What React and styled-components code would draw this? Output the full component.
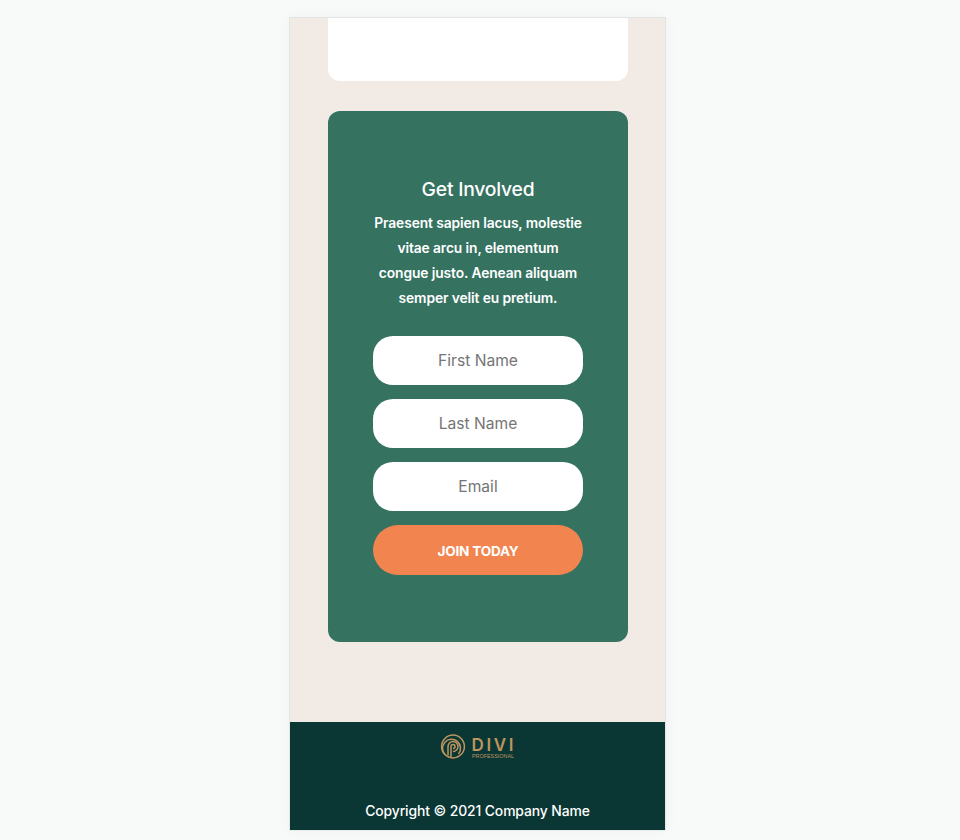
import styled, { createGlobalStyle } from 'styled-components';

const GlobalStyle = createGlobalStyle`
  * {
    box-sizing: border-box;
  }

  body {
    margin: 0;
    background: #f8faf9;
    font-family: Inter, "Noto Sans", "Liberation Sans", sans-serif;
  }
`;

const Page = styled.div`
  display: flex;
  justify-content: center;
  height: 840px;
  padding-top: 17px;
  padding-right: 5px;
  overflow: hidden;
`;

const Phone = styled.div`
  display: flex;
  flex-direction: column;
  width: 377px;
  height: 814px;
  border: 1px solid #e4e4e4;
  border-bottom-color: #e9eaea;
  background: #f2eae4;
  box-shadow: 0 0 14px rgba(0, 0, 0, 0.035);
`;

const Content = styled.main`
  display: flex;
  flex-direction: column;
  flex: 1;
  gap: 30px;
  padding: 0 37px 0 38px;
`;

const BlankCard = styled.div`
  height: 63px;
  background: #fff;
  border-radius: 0 0 12px 12px;
`;

const JoinCard = styled.section`
  display: flex;
  flex-direction: column;
  align-items: center;
  height: 531px;
  padding-top: 66px;
  background: #357260;
  border-radius: 12px;
  color: #fff;
`;

const Heading = styled.h2`
  margin: 0 0 9px;
  font-size: 19.3px;
  font-weight: 500;
  line-height: 25px;
  letter-spacing: -0.2px;
`;

const Blurb = styled.p`
  width: 210px;
  margin: 0 0 25px;
  font-size: 13.8px;
  font-weight: 600;
  line-height: 25px;
  text-align: center;
  letter-spacing: -0.1px;
`;

const Form = styled.form`
  display: flex;
  flex-direction: column;
  gap: 14px;
  width: 210px;
`;

const Field = styled.input`
  width: 100%;
  height: 49px;
  border: none;
  border-radius: 20px;
  background: #fff;
  font: 400 15.6px Inter, "Noto Sans", sans-serif;
  text-align: center;
  outline: none;

  &::placeholder {
    color: #757575;
    opacity: 1;
  }
`;

const JoinButton = styled.button`
  height: 50px;
  padding: 2px 0 0;
  border: none;
  border-radius: 25px;
  background: #f1844f;
  color: #fff;
  font: 700 13.6px Inter, "Noto Sans", sans-serif;
  letter-spacing: -0.2px;
`;

const Footer = styled.footer`
  display: flex;
  flex-direction: column;
  align-items: center;
  height: 108px;
  padding-top: 11px;
  background: #0a3633;
  color: #fff;
`;

const Logo = styled.svg`
  display: block;
  width: 78px;
  height: 28px;
`;

const LogoWord = styled.text`
  fill: #bc9560;
  font-family: Inter, "Noto Sans", sans-serif;
  font-size: 17px;
  font-weight: 600;
  letter-spacing: 2.6px;
`;

const LogoSub = styled.text`
  fill: #bc9560;
  font-family: "Liberation Sans", sans-serif;
  font-size: 5px;
`;

const Copyright = styled.p`
  margin: 40px 0 0;
  font-size: 13.9px;
  font-weight: 500;
  line-height: 20px;
  letter-spacing: -0.1px;
`;

const App = () => (
  <>
    <GlobalStyle />
    <Page>
      <Phone>
        <Content>
          <BlankCard />
          <JoinCard>
            <Heading>Get Involved</Heading>
            <Blurb>
              Praesent sapien lacus, molestie vitae arcu in, elementum congue
              justo. Aenean aliquam semper velit eu pretium.
            </Blurb>
            <Form onSubmit={(event) => event.preventDefault()}>
              <Field type='text' placeholder='First Name' />
              <Field type='text' placeholder='Last Name' />
              <Field type='email' placeholder='Email' />
              <JoinButton>JOIN TODAY</JoinButton>
            </Form>
          </JoinCard>
        </Content>
        <Footer>
          <Logo viewBox='0 0 78 28'>
            <g fill='none' stroke='#bc9560' strokeWidth='1.5'>
              <circle cx='14' cy='13.5' r='11.4' />
              <path d='M6.5 22 A9 9 0 1 1 19.5 21' />
              <path d='M9 22.5 V13.5 a5 5 0 1 1 5 5' />
              <path d='M12 24 V13.5 a2 2 0 1 1 2 2' />
            </g>
            <LogoWord x='32.5' y='18'>DIVI</LogoWord>
            <LogoSub x='33' y='24.5' textLength='42' lengthAdjust='spacingAndGlyphs'>PROFESSIONAL</LogoSub>
          </Logo>
          <Copyright>Copyright © 2021 Company Name</Copyright>
        </Footer>
      </Phone>
    </Page>
  </>
);

export default App;
